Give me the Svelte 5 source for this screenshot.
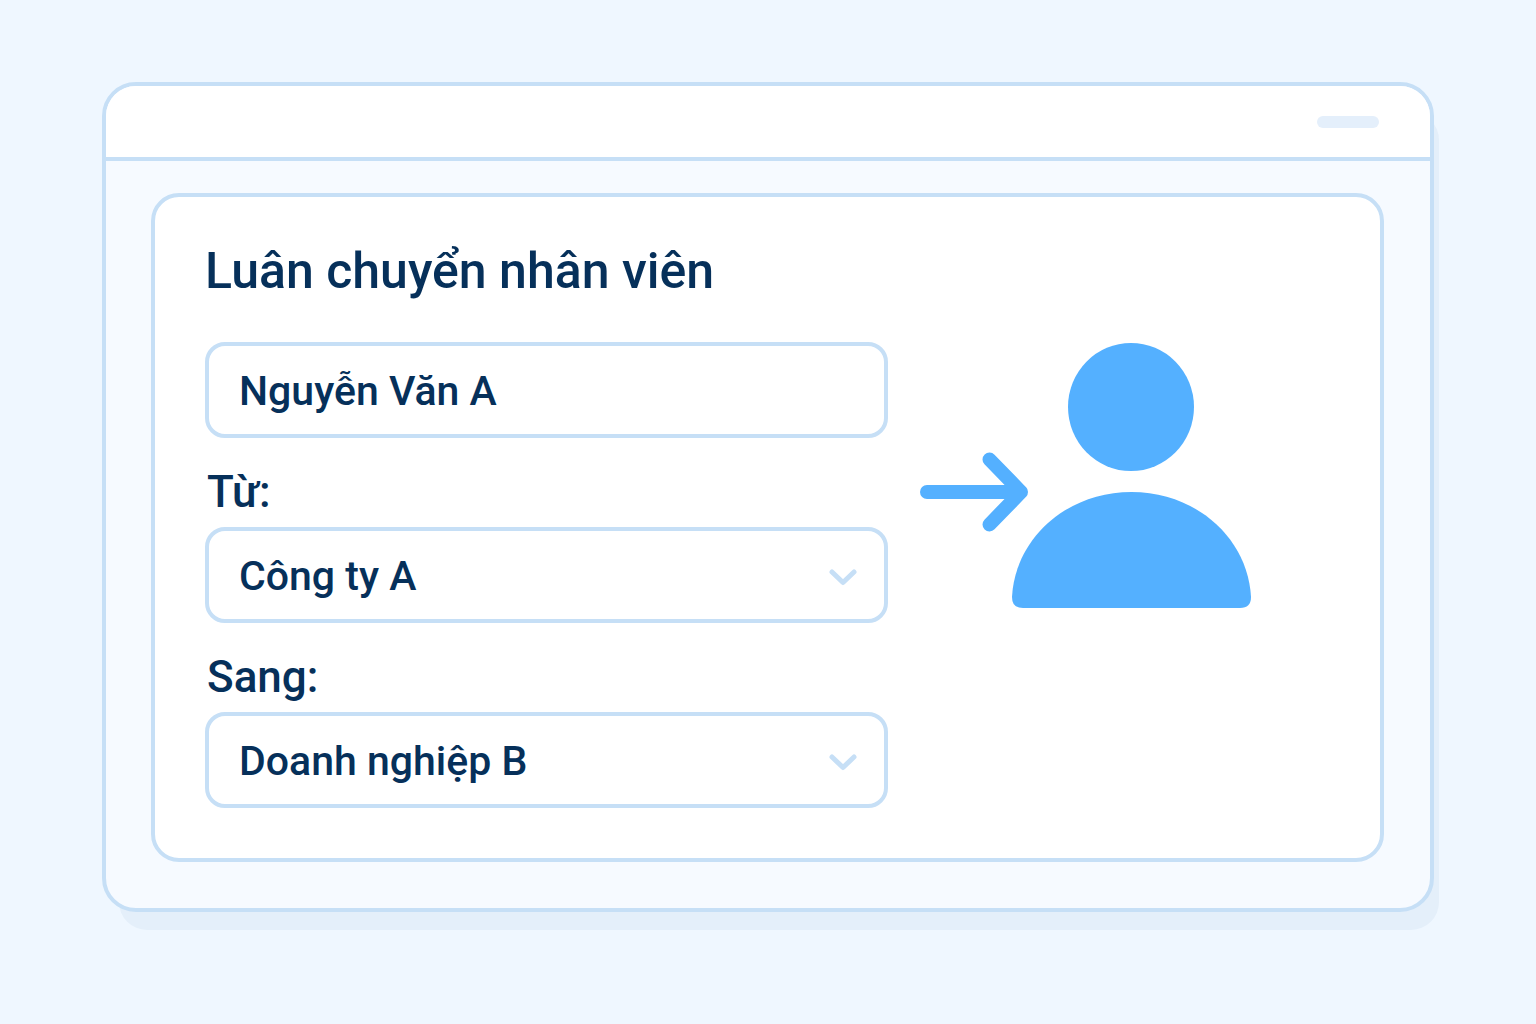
<script lang="ts">
	const companies = ['Công ty A', 'Doanh nghiệp B'];

	let employee = $state('Nguyễn Văn A');
	let from = $state('Công ty A');
	let to = $state('Doanh nghiệp B');
</script>

{#snippet chevron()}
	<svg class="chevron" viewBox="0 0 28 22" aria-hidden="true">
		<path d="M3 8 14 18.500 25 8" />
	</svg>
{/snippet}

<main class="page">
	<div class="window">
		<header class="titlebar">
			<span class="pill"></span>
		</header>

		<section class="card">
			<h1>Luân chuyển nhân viên</h1>

			<div class="columns">
				<form class="form" onsubmit={(e) => e.preventDefault()}>
					<input
						class="control"
						type="text"
						aria-label="Nhân viên"
						autocomplete="off"
						spellcheck="false"
						bind:value={employee}
					/>

					<label for="from">Từ:</label>
					<div class="select">
						<select id="from" class="control" bind:value={from}>
							{#each companies as company}
								<option value={company}>{company}</option>
							{/each}
						</select>
						{@render chevron()}
					</div>

					<label for="to">Sang:</label>
					<div class="select">
						<select id="to" class="control" bind:value={to}>
							{#each companies as company}
								<option value={company}>{company}</option>
							{/each}
						</select>
						{@render chevron()}
					</div>
				</form>

				<svg class="art" viewBox="0 0 332 266" aria-hidden="true">
					<ellipse cx="211" cy="65" rx="63" ry="64" />
					<path
						d="M92 255C95 197 146 150 211.500 150S328 197 331 255Q331 266 320 266H103Q92 266 92 255Z"
					/>
					<path class="arrow" d="M7 150H101M69.500 117.500 101 150 69.500 182.500" />
				</svg>
			</div>
		</section>
	</div>
</main>

<style>
	:global(body) {
		background: #eff7ff;
	}
	.page {
		padding: 82px 102px 112px;
		font-family: Roboto, Inter, 'Liberation Sans', sans-serif;
		font-weight: 500;
		color: #06305a;
	}
	.window {
		border: 4px solid #c6dff6;
		border-radius: 34px;
		background: #f6faff;
		box-shadow: 11px 24px 0 -6px #e4effa;
	}
	.titlebar {
		display: flex;
		align-items: center;
		justify-content: flex-end;
		height: 71px;
		padding-right: 51px;
		border-bottom: 4px solid #c6dff6;
		border-radius: 30px 30px 0 0;
		background: #fff;
	}
	.pill {
		width: 62px;
		height: 12px;
		border-radius: 6px;
		background: #e4effb;
	}
	.card {
		margin: 32px 46px 46px 45px;
		padding: 44px 50px 50px;
		border: 4px solid #c6dff6;
		border-radius: 28px;
		background: #fff;
	}
	h1 {
		margin: 0 0 41px;
		font-size: 50px;
		line-height: 60px;
		font-weight: 500;
	}
	.columns {
		display: grid;
		grid-template-columns: 5fr 3fr;
		gap: 32px;
		align-items: start;
	}
	.form {
		display: flex;
		flex-direction: column;
	}
	label {
		align-self: flex-start;
		margin: 28px 0 9px;
		padding-left: 2px;
		font-size: 44px;
		line-height: 52px;
	}
	.control {
		display: block;
		box-sizing: border-box;
		width: 100%;
		height: 96px;
		margin: 0;
		padding: 2px 30px 0;
		border: 4px solid #c6dff6;
		border-radius: 20px;
		background: #fff;
		color: inherit;
		font: inherit;
		font-size: 41px;
		appearance: none;
	}
	.control:focus {
		outline: none;
		border-color: #54b0ff;
	}
	.select {
		position: relative;
	}
	.chevron {
		position: absolute;
		top: 50%;
		right: 31px;
		width: 28px;
		height: 22px;
		transform: translateY(-50%);
		fill: none;
		stroke: #c6dff6;
		stroke-width: 5;
		stroke-linecap: round;
		stroke-linejoin: round;
		pointer-events: none;
	}
	.art {
		width: 100%;
		max-width: 332px;
		fill: #54b0ff;
	}
	.arrow {
		fill: none;
		stroke: #54b0ff;
		stroke-width: 14;
		stroke-linecap: round;
		stroke-linejoin: round;
	}
</style>
